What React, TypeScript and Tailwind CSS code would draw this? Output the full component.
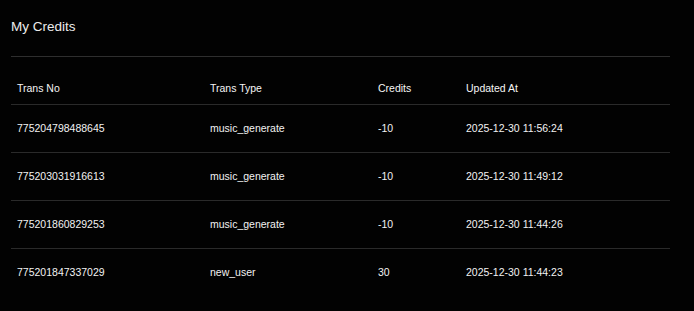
const rows = [
  { no: '775204798488645', type: 'music_generate', credits: '-10', at: '2025-12-30 11:56:24' },
  { no: '775203031916613', type: 'music_generate', credits: '-10', at: '2025-12-30 11:49:12' },
  { no: '775201860829253', type: 'music_generate', credits: '-10', at: '2025-12-30 11:44:26' },
  { no: '775201847337029', type: 'new_user', credits: '30', at: '2025-12-30 11:44:23' },
];

export default function App() {
  return (
    <div
      className="w-[694px] h-[311px] bg-[#020202] text-[#f2f2f2] px-[11px] pt-[18px] overflow-hidden"
      style={{ fontFamily: '"Liberation Sans", Arial, sans-serif' }}
    >
      <div className="w-[659px] pb-[20px] border-b border-[#2e2e2e]">
        <h2 className="text-[13.5px] leading-[18px] text-[#ececec]">My Credits</h2>
      </div>

      <div className="w-[659px] mt-[16px] text-[10.5px]">
        <div className="grid grid-cols-[193px_168px_88px_1fr] h-[32px] items-center border-b border-[#2a2a2a] text-[#f5f5f5]">
          <div className="px-[6px] pt-[1px]">Trans No</div>
          <div className="px-[6px] pt-[1px]">Trans Type</div>
          <div className="px-[6px] pt-[1px]">Credits</div>
          <div className="px-[6px] pt-[1px]">Updated At</div>
        </div>
        {rows.map((r, i) => (
          <div
            key={r.no}
            className={`grid grid-cols-[193px_168px_88px_1fr] h-[48px] items-center ${
              i < rows.length - 1 ? 'border-b border-[#2a2a2a]' : ''
            }`}
          >
            <div className="px-[6px]">{r.no}</div>
            <div className="px-[6px]">{r.type}</div>
            <div className="px-[6px]">{r.credits}</div>
            <div className="px-[6px]">{r.at}</div>
          </div>
        ))}
      </div>
    </div>
  );
}
